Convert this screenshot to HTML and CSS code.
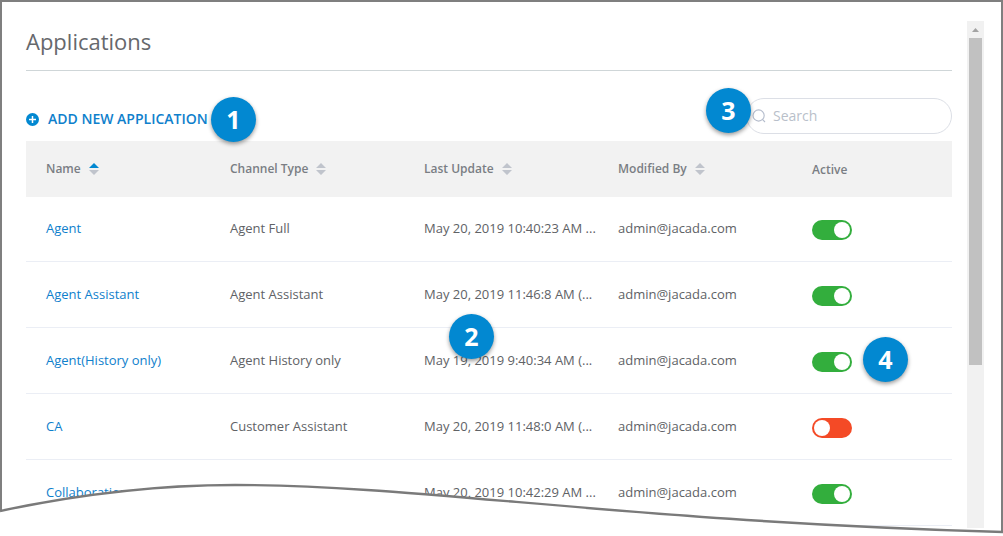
FILE: index.html
```html
<!DOCTYPE html>
<html lang="en">
<head>
<meta charset="utf-8">
<title>Applications</title>
<link rel="stylesheet" href="styles.css">
</head>
<body>
<div class="frame">
  <main class="content">
    <h1 class="title">Applications</h1>
    <div class="toolbar">
      <button class="add" type="button">
        <svg class="add-icon" viewBox="0 0 13 13" aria-hidden="true"><circle cx="6.5" cy="6.5" r="6.5" fill="#0288d1"/><path d="M6.5 3v7M3 6.5h7" stroke="#fff" stroke-width="1.5"/></svg>
        ADD NEW APPLICATION
        <span class="callout callout-add">1</span>
      </button>
      <div class="search">
        <svg class="search-icon" viewBox="0 0 14 14" aria-hidden="true"><circle cx="6.6" cy="6.5" r="5.6" fill="none" stroke="#b4bccc" stroke-width="1.1"/><path d="M10.4 10.4l2.6 2.6" stroke="#b4bccc" stroke-width="1.1"/></svg>
        <input class="search-input" type="text" placeholder="Search" aria-label="Search">
        <span class="callout callout-search">3</span>
      </div>
    </div>
    <table class="apps">
      <colgroup><col class="col-name"><col class="col-mid"><col class="col-mid"><col class="col-mid"><col></colgroup>
      <thead>
        <tr>
          <th scope="col"><span class="sortable">Name <svg class="sort sort-asc" viewBox="0 0 10 12" aria-hidden="true"><path class="up" d="M0 5l5-5 5 5z"/><path d="M0 7h10l-5 5z"/></svg></span></th>
          <th scope="col"><span class="sortable">Channel Type <svg class="sort" viewBox="0 0 10 12" aria-hidden="true"><path d="M0 5l5-5 5 5zM0 7h10l-5 5z"/></svg></span></th>
          <th scope="col"><span class="sortable">Last Update <svg class="sort" viewBox="0 0 10 12" aria-hidden="true"><path d="M0 5l5-5 5 5zM0 7h10l-5 5z"/></svg></span></th>
          <th scope="col"><span class="sortable">Modified By <svg class="sort" viewBox="0 0 10 12" aria-hidden="true"><path d="M0 5l5-5 5 5zM0 7h10l-5 5z"/></svg></span></th>
          <th scope="col">Active</th>
        </tr>
      </thead>
      <tbody>
        <tr>
          <td><a href="#agent">Agent</a></td><td>Agent Full</td><td>May 20, 2019 10:40:23 AM ...</td><td>admin@jacada.com</td>
          <td><input class="switch" type="checkbox" aria-label="Agent active" checked></td>
        </tr>
        <tr>
          <td><a href="#agent-assistant">Agent Assistant</a></td><td>Agent Assistant</td><td>May 20, 2019 11:46:8 AM (...</td><td>admin@jacada.com</td>
          <td><input class="switch" type="checkbox" aria-label="Agent Assistant active" checked></td>
        </tr>
        <tr>
          <td><a href="#agent-history">Agent(History only)</a></td><td>Agent History only</td><td>May 19, 2019 9:40:34 AM (...<span class="callout callout-row">2</span></td><td>admin@jacada.com</td>
          <td><input class="switch" type="checkbox" aria-label="Agent(History only) active" checked><span class="callout callout-active">4</span></td>
        </tr>
        <tr>
          <td><a href="#ca">CA</a></td><td>Customer Assistant</td><td>May 20, 2019 11:48:0 AM (...</td><td>admin@jacada.com</td>
          <td><input class="switch" type="checkbox" aria-label="CA active"></td>
        </tr>
        <tr>
          <td><a href="#collaboration">Collaboration</a></td><td></td><td>May 20, 2019 10:42:29 AM ...</td><td>admin@jacada.com</td>
          <td><input class="switch" type="checkbox" aria-label="Collaboration active" checked></td>
        </tr>
      </tbody>
    </table>
  </main>
  <div class="scrollbar" aria-hidden="true">
    <svg class="scroll-arrow" viewBox="0 0 17 17"><path d="M5 11l3.5-4 3.5 4z" fill="#a3a3a3"/></svg>
    <div class="scroll-thumb"></div>
  </div>
  <svg class="tear" viewBox="0 0 1003 56" preserveAspectRatio="none" aria-hidden="true">
    <path d="M0 31C80 14 155 5 235 5C420 5 620 41 1003 52V56H0z" fill="#fff"/>
    <path d="M0 31C80 14 155 5 235 5C420 5 620 41 1003 52" fill="none" stroke="#7a7a7a" stroke-width="2.4"/>
  </svg>
</div>
</body>
</html>
```
FILE: styles.css
```css
* { box-sizing: border-box; }

body {
  margin: 0;
  background: #fff;
  color: #606266;
  font: 13px/20px "Open Sans", "Noto Sans", sans-serif;
}

.frame {
  position: relative;
  display: flex;
  gap: 15px;
  min-height: 100vh;
  padding: 19px 17px 8px 24px;
  border: 2px solid #7f7f7f;
  border-bottom: 0;
}

.content { flex: 1; min-width: 0; }

.title {
  margin: 0 0 27px;
  padding: 4px 0 13px;
  border-bottom: 1px solid #cfd6d8;
  color: #66686c;
  font-size: 22px;
  line-height: 32px;
  font-weight: 400;
}

.toolbar {
  display: flex;
  align-items: center;
  justify-content: space-between;
  margin-bottom: 7px;
}

.add {
  position: relative;
  display: flex;
  align-items: center;
  gap: 9px;
  padding: 6px 0 0;
  border: 0;
  background: none;
  color: #0f80cc;
  font: 600 14px/20px "Open Sans", "Noto Sans", sans-serif;
}

.add-icon { width: 13px; height: 13px; }

.search { position: relative; width: 206px; }

.search-icon {
  position: absolute;
  top: 11px;
  left: 6px;
  width: 14px;
  height: 14px;
}

.search-input {
  display: block;
  width: 100%;
  height: 36px;
  padding: 0 16px 2px 26px;
  border: 1px solid #dcdfe6;
  border-radius: 18px;
  background: transparent;
  color: #606266;
  font: 14px "Open Sans", "Noto Sans", sans-serif;
}

.search-input::placeholder { color: #b9bfca; opacity: 1; }

.apps {
  width: 100%;
  table-layout: fixed;
  border-collapse: separate;
  border-spacing: 0;
}

.col-name { width: 184px; }
.col-mid { width: 194px; }

.apps th {
  height: 56px;
  padding: 0 0 0 20px;
  background: #f2f2f2;
  color: #7a7e84;
  font-size: 12px;
  font-weight: 600;
  text-align: left;
}

.apps th:last-child { padding-top: 2px; }

.apps td {
  position: relative;
  height: 66px;
  padding: 0 0 2px 20px;
  border-bottom: 1px solid #ebeef5;
  white-space: nowrap;
}

.apps tbody tr:first-child td { height: 65px; }

.apps a { color: #0f80cc; text-decoration: none; }

.sortable { display: flex; align-items: center; gap: 8px; }

.sort { width: 10px; height: 12px; fill: #c0c4cc; }
.sort .up { fill: #0288d1; }

.switch {
  appearance: none;
  display: block;
  width: 40px;
  height: 20px;
  margin: 4px 0 0;
  padding: 2px;
  border-radius: 10px;
  background: #f44a26;
}

.switch::before {
  content: "";
  display: block;
  width: 16px;
  height: 16px;
  border-radius: 50%;
  background: #fff;
}

.switch:checked { background: #33ae3d; }
.switch:checked::before { margin-left: auto; }

.callout {
  position: absolute;
  z-index: 1;
  width: 45px;
  height: 45px;
  border-radius: 50%;
  background: #0288d1;
  box-shadow: 0 2px 4px rgba(0, 0, 0, 0.4);
  color: #fff;
  font: 700 25px/44px "Open Sans", "Noto Sans", sans-serif;
  text-align: center;
}

.callout-add { left: 185px; top: -6px; }
.callout-search { left: -40px; top: -10px; }
.callout-row { left: 45px; top: -14px; }
.callout-active { left: 71px; top: 9px; }

.scrollbar {
  width: 17px;
  background: #f1f1f1;
}

.scroll-arrow { display: block; width: 17px; height: 17px; }

.scroll-thumb {
  height: 327px;
  margin: 0 2px;
  background: #c1c1c1;
}

.tear {
  position: absolute;
  left: -2px;
  bottom: 0;
  width: calc(100% + 4px);
  height: 56px;
}
```
